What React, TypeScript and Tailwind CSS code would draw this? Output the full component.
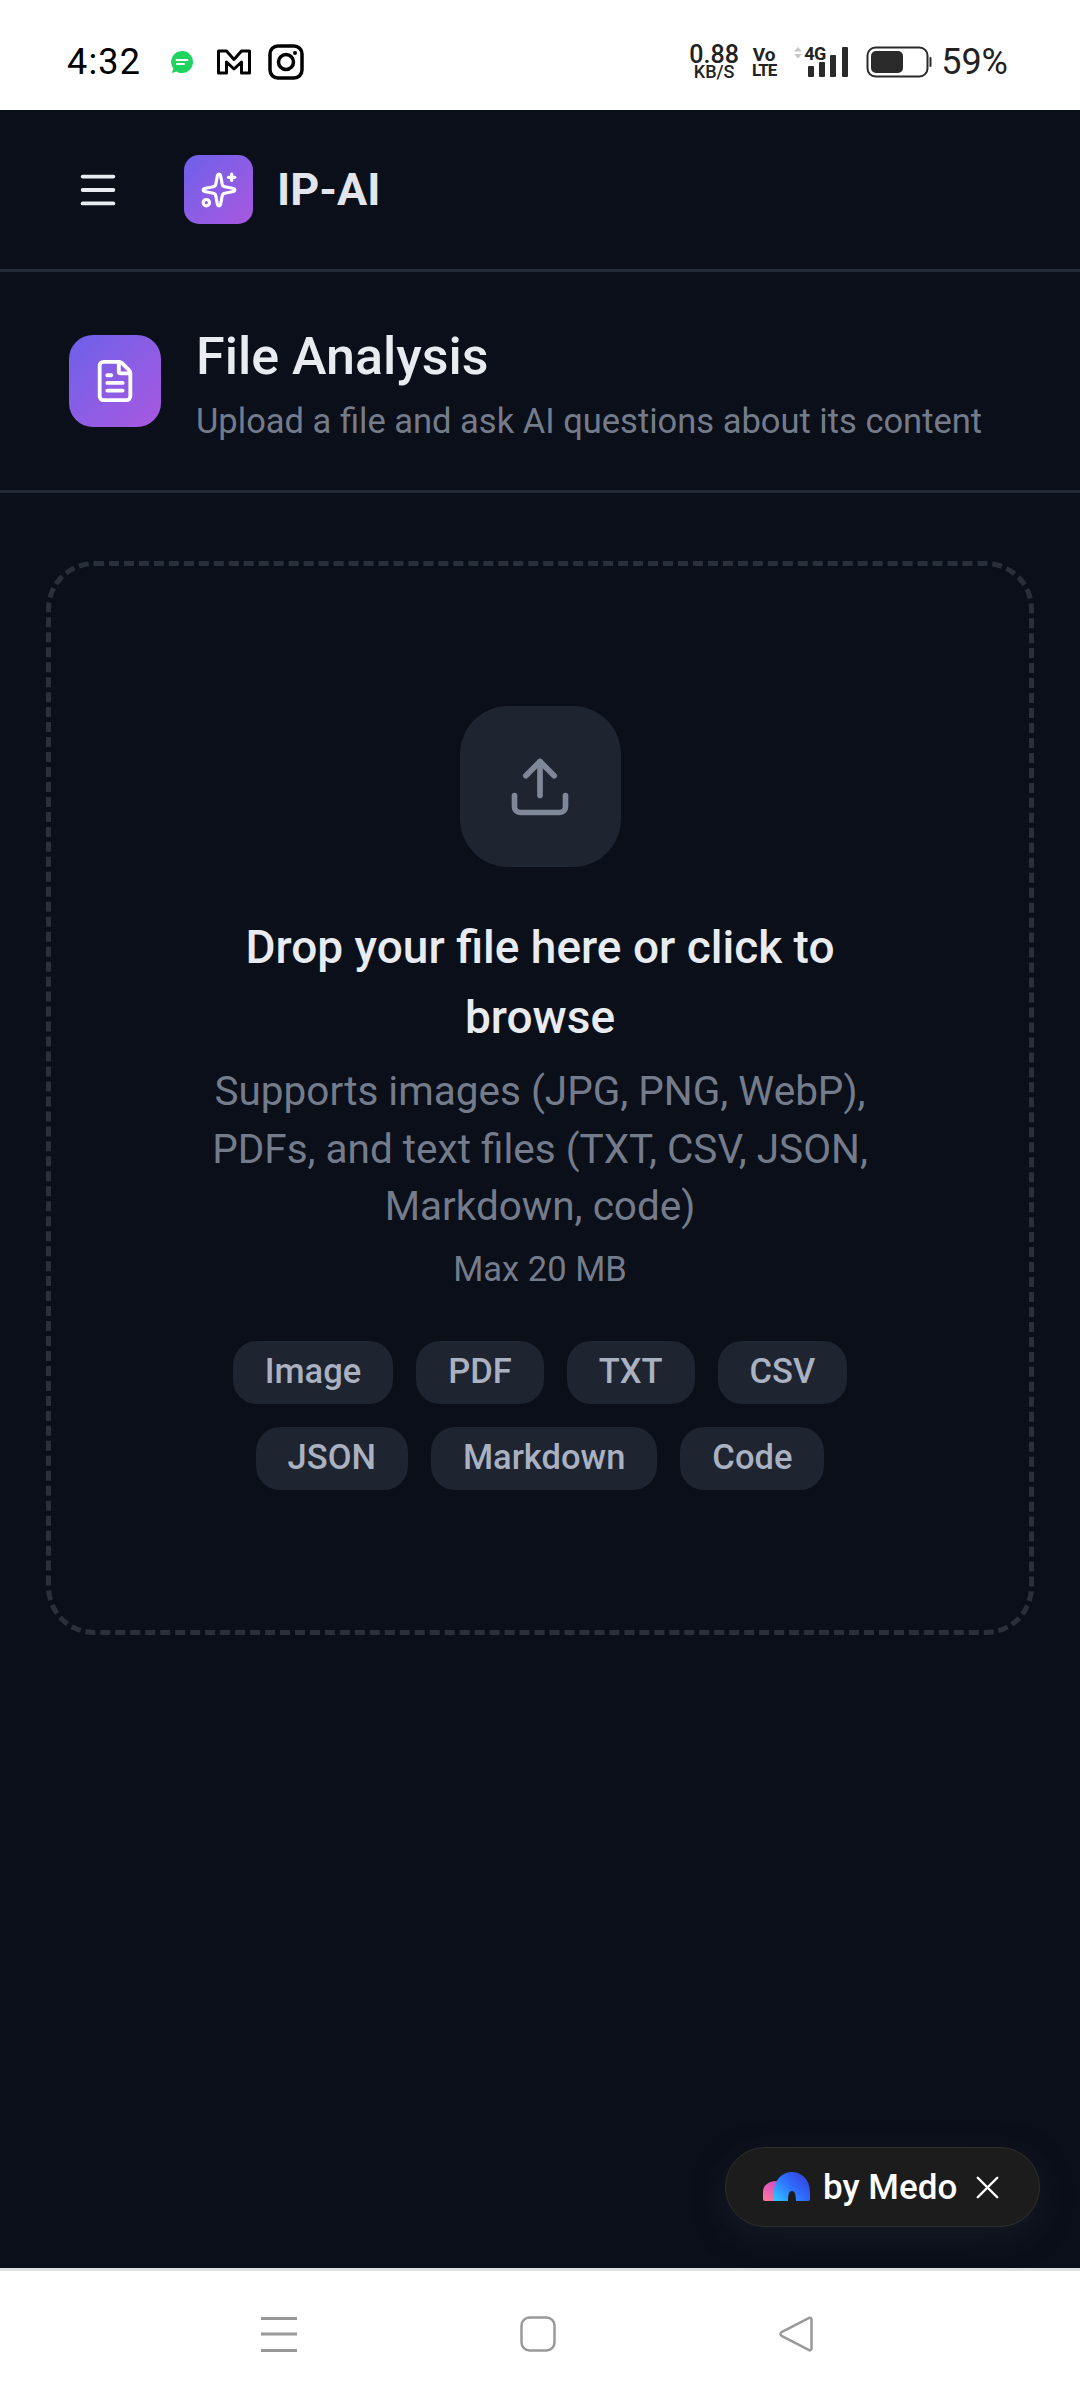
import { FileText, Menu, Sparkles, Upload, X } from 'lucide-react';

const chipRows = [
  ['Image', 'PDF', 'TXT', 'CSV'],
  ['JSON', 'Markdown', 'Code'],
];

function StatusBar() {
  return (
    <div className="flex h-[110px] shrink-0 items-center justify-between bg-white pl-[67px] pr-[72px] pt-[14px] text-black">
      <div className="flex items-center">
        <span className="w-[96px] text-[36px] leading-none tracking-[1.2px]">4:32</span>
        <svg width="26" height="26" viewBox="0 0 26 26" className="ml-[6px]">
          <path d="M13 2a11 11 0 0 1 0 22c-2 0-4-.5-5.500-1.500L3 24l1.300-4.500A11 11 0 0 1 13 2z" fill="#1ed45f" />
          <path d="M7.500 11h11M8 15h7" stroke="#fff" strokeWidth="2" strokeLinecap="round" fill="none" />
        </svg>
        <svg width="34" height="26" viewBox="0 0 34 26" className="ml-[22px]" fill="none">
          <path d="M1.500 2h8L17 10.500 24.500 2h8v22h-8V13L17 20 9.500 13v11h-8z" stroke="#000" strokeWidth="3" strokeLinejoin="round" />
        </svg>
        <svg width="36" height="36" viewBox="0 0 36 36" className="ml-[17px]" fill="none">
          <rect x="2" y="2" width="32" height="32" rx="8" stroke="#000" strokeWidth="3.500" />
          <circle cx="18" cy="18" r="7.500" stroke="#000" strokeWidth="3.500" />
          <circle cx="27" cy="9" r="2" fill="#000" />
        </svg>
      </div>
      <div className="flex items-center text-[#222]">
        <div className="flex w-[52px] flex-col items-center font-medium leading-none">
          <span className="text-[25px] leading-[19px]">0.88</span>
          <span className="text-[18px] leading-[16px]">KB/S</span>
        </div>
        <div className="ml-[13px] flex w-[22px] flex-col items-center font-bold leading-none">
          <span className="text-[19px] leading-[16px]">Vo</span>
          <span className="text-[17px] leading-[15px] tracking-[-1px]">LTE</span>
        </div>
        <div className="relative ml-[15px] h-[32px] w-[60px]">
          <svg width="60" height="32" viewBox="0 0 60 32" className="absolute inset-0">
            <path d="M4 5.500 8 1l4 4.500zM4 8h8l-4 4.500z" fill="#c8c8c8" />
            <rect x="18" y="20" width="6" height="11" rx="1" fill="#2a2a2a" />
            <rect x="29" y="16" width="6" height="15" rx="1" fill="#2a2a2a" />
            <rect x="40" y="9" width="6" height="22" rx="1" fill="#2a2a2a" />
            <rect x="52" y="1" width="6" height="30" rx="1" fill="#2a2a2a" />
          </svg>
          <span className="absolute left-[14px] top-0 text-[18px] font-bold leading-[16px] tracking-[-0.5px]">4G</span>
        </div>
        <svg width="66" height="32" viewBox="0 0 66 32" className="ml-[16px]" fill="none">
          <rect x="1.500" y="1.500" width="60" height="29" rx="8" stroke="#2a2a2a" strokeWidth="2" />
          <rect x="5" y="5" width="32" height="22" rx="5" fill="#2a2a2a" />
          <rect x="63.500" y="11" width="2" height="10" rx="1" fill="#2a2a2a" />
        </svg>
        <span className="ml-[9px] text-[36px] leading-none">59%</span>
      </div>
    </div>
  );
}

function MedoLogo() {
  return (
    <svg width="48" height="30" viewBox="0 0 48 30">
      <defs>
        <linearGradient id="medoPink" x1="0" y1="1" x2="0.5" y2="0">
          <stop offset="0" stopColor="#ff7a9c" />
          <stop offset="1" stopColor="#d84fc0" />
        </linearGradient>
        <linearGradient id="medoBlue" x1="0" y1="1" x2="1" y2="0.2">
          <stop offset="0" stopColor="#2fc8ff" />
          <stop offset="0.55" stopColor="#2f6cff" />
          <stop offset="1" stopColor="#3440d8" />
        </linearGradient>
      </defs>
      <path d="M0 27V20C0 13 6 9 13 9c3 0 5 1 6 2l-4 18H2a2 2 0 0 1-2-2z" fill="url(#medoPink)" />
      <path d="M11 29V20C11 8 19 0 29 0s18 8 18 20v7a2 2 0 0 1-2 2H33c0-6-1-10-4-10s-4 4-4 10z" fill="url(#medoBlue)" />
    </svg>
  );
}

function FileDropzone() {
  return (
    <div className="flex h-[1074px] flex-col items-center rounded-[48px] border-[5px] border-dashed border-[#2a303b] pt-[140px]">
      <div className="flex h-[161px] w-[161px] items-center justify-center rounded-[48px] bg-[#1e2430]">
        <Upload size={68} strokeWidth={2} className="text-[#7f8899]" />
      </div>
      <h2 className="mt-[45px] w-[680px] text-center text-[46px] font-medium leading-[70px] text-[#e8ebf0]">
        Drop your file here or click to browse
      </h2>
      <p className="mt-[11px] w-[680px] text-center text-[40.500px] leading-[57.500px] text-[#747c8c]">
        Supports images (JPG, PNG, WebP), PDFs, and text files (TXT, CSV, JSON, Markdown, code)
      </p>
      <p className="mt-[8px] text-[34.500px] leading-[50px] text-[#747c8c]">Max 20 MB</p>
      <div className="mt-[47px] flex flex-col items-center gap-[23px]">
        {chipRows.map((row, i) => (
          <div key={i} className="flex gap-[23px]">
            {row.map((chip) => (
              <span
                key={chip}
                className="flex h-[63px] items-center rounded-[24px] bg-[#1e2430] px-[32px] text-[34.500px] font-medium text-[#aab1c0]"
              >
                {chip}
              </span>
            ))}
          </div>
        ))}
      </div>
    </div>
  );
}

export default function App() {
  return (
    <div className="relative flex h-[2400px] w-[1080px] flex-col overflow-hidden bg-white font-['Roboto',sans-serif]">
      <StatusBar />
      <main className="flex min-h-0 flex-1 flex-col bg-[#0b0f19]">
        <header className="flex h-[162px] shrink-0 items-center border-b-[3px] border-[#252b36] pl-[75px]">
          <Menu size={46} strokeWidth={2} className="text-[#e8ebf0]" />
          <div className="ml-[63px] flex h-[69px] w-[69px] items-center justify-center rounded-[15px] bg-gradient-to-br from-[#6c60ea] to-[#a857df]">
            <Sparkles size={38} strokeWidth={2} className="text-white" />
          </div>
          <span className="ml-[24px] text-[45px] font-bold leading-none text-[#e2e6ec]">IP-AI</span>
        </header>
        <section className="flex h-[221px] shrink-0 items-center border-b-[3px] border-[#252b36] pl-[69px]">
          <div className="flex h-[92px] w-[92px] items-center justify-center rounded-[24px] bg-gradient-to-br from-[#6c60ea] to-[#a857df]">
            <FileText size={46} strokeWidth={2} className="text-white" />
          </div>
          <div className="ml-[35px] flex flex-col pt-[11px]">
            <h1 className="text-[52px] font-medium leading-[60px] text-[#e8ebf0]">File Analysis</h1>
            <p className="mt-[9px] text-[34.500px] leading-[50px] text-[#747c8c]">
              Upload a file and ask AI questions about its content
            </p>
          </div>
        </section>
        <div className="px-[46px] pt-[68px]">
          <FileDropzone />
        </div>
      </main>
      <nav className="flex h-[132px] shrink-0 items-start justify-between border-t-[3px] border-[#dfe2e2] bg-white pl-[261px] pr-[267px] pt-[45px]">
        <svg width="36" height="36" viewBox="0 0 36 36" fill="#999">
          <rect y="1" width="36" height="3" />
          <rect y="16.500" width="36" height="3" />
          <rect y="33" width="36" height="3" />
        </svg>
        <svg width="36" height="36" viewBox="0 0 36 36" fill="none" stroke="#999" strokeWidth="2.500">
          <rect x="1.500" y="1.500" width="33" height="33" rx="8" />
        </svg>
        <svg width="34" height="36" viewBox="0 0 34 36" fill="none" stroke="#999" strokeWidth="2.500" strokeLinejoin="round">
          <path d="M32.500 3.500v29c0 1.500-1.500 2.200-2.800 1.400L3 20.200c-2-1.200-2-3.200 0-4.400L29.700 2.100c1.300-.8 2.800-.1 2.800 1.400z" />
        </svg>
      </nav>
      <div className="absolute left-[725px] top-[2147px] flex h-[80px] w-[315px] items-center rounded-full border border-[#2e2e2e] bg-[#1c1c1c] pl-[37px] shadow-[0_10px_30px_rgba(30,35,50,0.5)]">
        <MedoLogo />
        <span className="ml-[12px] text-[35px] font-medium leading-none text-white">by Medo</span>
        <X size={39} strokeWidth={1.500} className="ml-[11px] text-white" />
      </div>
    </div>
  );
}
